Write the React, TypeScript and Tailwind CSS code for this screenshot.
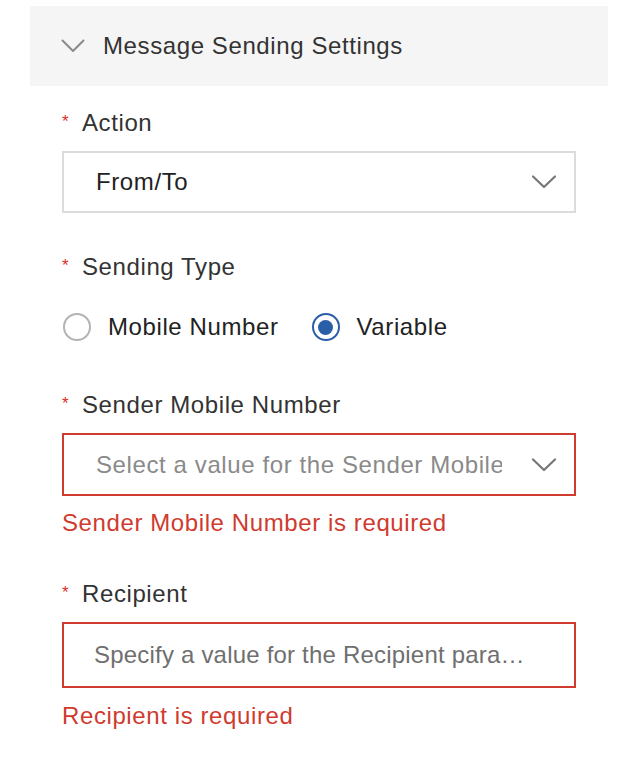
const font = { fontFamily: '"Liberation Sans", Arial, sans-serif', letterSpacing: '0.6px' }

function Label({ text }: { text: string }) {
  return (
    <div className="flex items-center h-[30px] text-[24px] text-[#333]">
      <span className="text-[#d93025] text-[17px] w-[20px] -mt-[3px]">*</span>
      <span>{text}</span>
    </div>
  )
}

function Radio({ checked, label }: { checked?: boolean; label: string }) {
  return (
    <label className="flex items-center gap-[17px]">
      {checked ? (
        <span className="w-[28px] h-[28px] rounded-full border-[2.5px] border-[#2a5fa8] flex items-center justify-center">
          <span className="w-[15px] h-[15px] rounded-full bg-[#2a5fa8]" />
        </span>
      ) : (
        <span className="w-[28px] h-[28px] rounded-full border-2 border-[#b3b3b3]" />
      )}
      <span className="text-[24px] leading-[30px] text-[#222]">{label}</span>
    </label>
  )
}

function Chevron() {
  return (
    <svg width="26" height="16" viewBox="0 0 26 16" fill="none" className="shrink-0">
      <path d="M2 2.5 L13 13 L24 2.5" stroke="#777" strokeWidth="2.2" strokeLinecap="round" strokeLinejoin="round" />
    </svg>
  )
}

export default function App() {
  return (
    <div className="w-[628px] h-[774px] bg-white" style={font}>
      <div className="pt-[6px] pl-[30px] pr-[20px]">
        <div className="h-[80px] bg-[#f5f5f5] flex items-center pl-[31px]">
          <svg width="24" height="14" viewBox="0 0 24 14" fill="none">
            <path d="M1.5 1.5 L12 12 L22.5 1.5" stroke="#8a8a8a" strokeWidth="2" strokeLinecap="round" strokeLinejoin="round" />
          </svg>
          <span className="ml-[18px] text-[24px] text-[#333]">Message Sending Settings</span>
        </div>
        <div className="pl-[32px] pr-[32px] pt-[22px]">
          <Label text="Action" />
          <div className="mt-[13px] h-[62px] border-2 border-[#dcdcdc] flex items-center justify-between pl-[32px] pr-[17px]">
            <span className="text-[24px] text-[#222]">From/To</span>
            <Chevron />
          </div>

          <div className="mt-[39px]">
            <Label text="Sending Type" />
          </div>
          <div className="mt-[30px] flex items-center gap-[33px] pl-[1px]">
            <Radio label="Mobile Number" />
            <Radio checked label="Variable" />
          </div>

          <div className="mt-[48px]">
            <Label text="Sender Mobile Number" />
          </div>
          <div className="mt-[13px] h-[63px] border-2 border-[#cf3b2f] flex items-center justify-between pl-[32px] pr-[17px]">
            <span className="text-[24px] text-[#8a8a8a] whitespace-nowrap overflow-hidden w-[406px]">Select a value for the Sender Mobile Number</span>
            <Chevron />
          </div>
          <div className="mt-[12px] text-[24px] text-[#cf3b2f] leading-[30px]">Sender Mobile Number is required</div>

          <div className="mt-[41px]">
            <Label text="Recipient" />
          </div>
          <div className="mt-[13px] h-[66px] border-2 border-[#cf3b2f] flex items-center pl-[30px] pr-[40px]">
            <span className="text-[24px] tracking-[0.2px] text-[#6f6f6f] whitespace-nowrap overflow-hidden text-ellipsis">Specify a value for the Recipient parameter</span>
          </div>
          <div className="mt-[13px] text-[24px] text-[#cf3b2f] leading-[30px]">Recipient is required</div>
        </div>
      </div>
    </div>
  )
}
